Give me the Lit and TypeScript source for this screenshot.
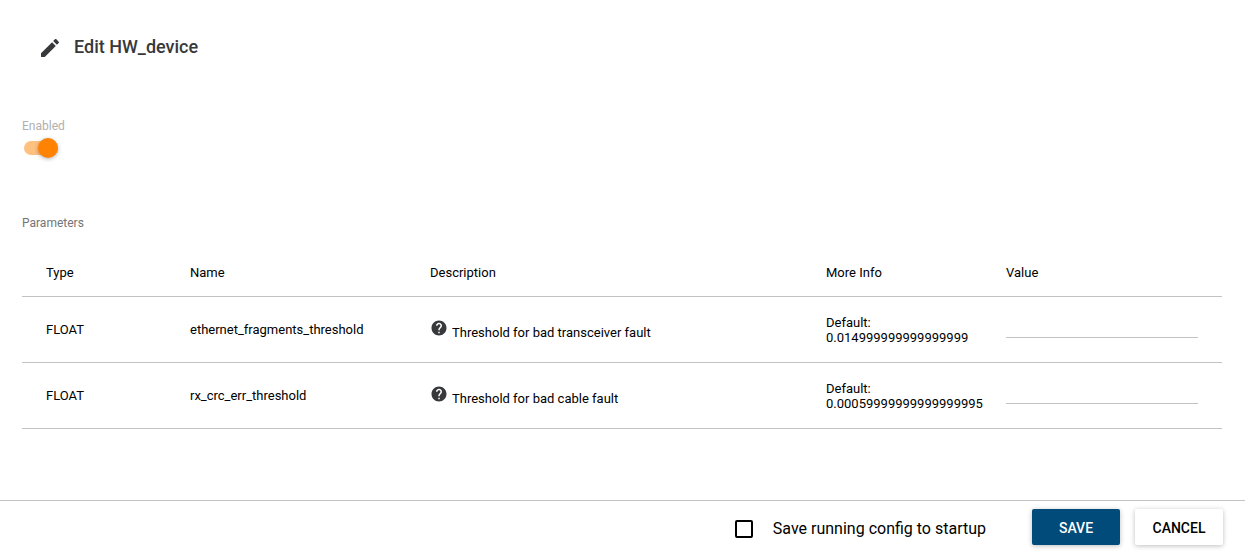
import { LitElement, html, css } from "lit";
import { customElement, state } from "lit/decorators.js";

interface Parameter {
  type: string;
  name: string;
  description: string;
  defaultValue: string;
}

const PARAMETERS: Parameter[] = [
  {
    type: "FLOAT",
    name: "ethernet_fragments_threshold",
    description: "Threshold for bad transceiver fault",
    defaultValue: "0.014999999999999999",
  },
  {
    type: "FLOAT",
    name: "rx_crc_err_threshold",
    description: "Threshold for bad cable fault",
    defaultValue: "0.00059999999999999995",
  },
];

@customElement("app-root")
export class AppRoot extends LitElement {
  @state() private enabled = true;
  @state() private saveToStartup = false;

  static styles = css`
    :host {
      display: block;
      font-family: Roboto, "Liberation Sans", sans-serif;
      font-size: 13px;
      line-height: 15px;
      color: #000;
      background: #fff;
    }
    * {
      box-sizing: border-box;
    }
    .page {
      display: flex;
      flex-direction: column;
      min-height: 100vh;
    }
    .header {
      display: flex;
      align-items: flex-start;
      gap: 12px;
      padding: 36px 38px 0;
    }
    .icon {
      display: block;
      flex: none;
      fill: #37393a;
    }
    .title {
      margin: 0;
      font-size: 18px;
      line-height: 22px;
      font-weight: 500;
      color: #37393a;
    }
    .content {
      flex: 1;
      padding: 0 23px 0 22px;
    }
    .enabled {
      display: flex;
      flex-direction: column;
      align-items: flex-start;
      gap: 7px;
      margin-top: 59px;
      font-size: 12px;
      color: #b0b0b0;
    }
    .switch {
      appearance: none;
      display: flex;
      align-items: center;
      width: 34px;
      height: 14px;
      margin: 0 2px;
      border-radius: 7px;
      background: #bdbdbd;
      cursor: pointer;
    }
    .switch::before {
      content: "";
      flex: none;
      width: 20px;
      height: 20px;
      border-radius: 50%;
      background: #fafafa;
      box-shadow: 0 1px 4px rgba(0, 0, 0, 0.3);
    }
    .switch:checked {
      justify-content: flex-end;
      background: #ffc180;
    }
    .switch:checked::before {
      background: #ff8200;
    }
    .section {
      margin: 61px 0 17px;
      font-size: 12px;
      line-height: 15px;
      font-weight: 400;
      color: #757575;
    }
    .table {
      width: 100%;
      table-layout: fixed;
      border-collapse: separate;
      border-spacing: 0;
    }
    .table th,
    .table td {
      padding: 0 24px;
      border-bottom: 1px solid #c3c3c6;
      text-align: left;
      font-weight: 400;
      vertical-align: middle;
    }
    .table th {
      height: 49px;
    }
    .table td {
      height: 66px;
    }
    .col-type {
      width: 12%;
    }
    .col-name {
      width: 20%;
    }
    .col-description {
      width: 33%;
    }
    .col-info {
      width: 15%;
    }
    .table td.info {
      padding-right: 0;
    }
    .description {
      display: flex;
      align-items: flex-end;
      gap: 4px;
    }
    .help {
      margin-bottom: 3px;
    }
    .value {
      display: block;
      width: 100%;
      height: 16px;
      padding: 0;
      border: 0;
      border-bottom: 1px solid #c3c3c6;
      border-radius: 0;
      outline: none;
      background: none;
      font: inherit;
    }
    .value:focus {
      border-color: #004b79;
    }
    .footer {
      display: flex;
      justify-content: flex-end;
      align-items: center;
      flex-wrap: wrap;
      padding: 8px 22px 7px;
      border-top: 1px solid #c3c3c6;
    }
    .startup {
      display: flex;
      align-items: center;
      gap: 20px;
      margin-right: 46px;
      padding-top: 4px;
      font-size: 16px;
      line-height: 20px;
      cursor: pointer;
    }
    .checkbox {
      appearance: none;
      width: 18px;
      height: 18px;
      margin: 0;
      border: 2px solid #000;
      border-radius: 2px;
      cursor: pointer;
    }
    .checkbox:checked {
      background: #004b79;
    }
    .actions {
      display: flex;
      gap: 15px;
    }
    .button {
      min-width: 88px;
      height: 36px;
      padding: 2px 16px 0;
      border: 0;
      border-radius: 2px;
      background: #fff;
      color: #000;
      font-family: inherit;
      font-size: 14px;
      font-weight: 500;
      line-height: 20px;
      text-transform: uppercase;
      box-shadow: 0 1px 5px rgba(0, 0, 0, 0.26);
      cursor: pointer;
    }
    .primary {
      background: #004b79;
      color: #fff;
    }
  `;

  private renderRow(p: Parameter) {
    return html`
      <tr>
        <td>${p.type}</td>
        <td>${p.name}</td>
        <td>
          <div class="description">
            <svg class="icon help" width="18" height="18" viewBox="0 0 24 24" aria-hidden="true">
              <path
                d="M12 2C6.48 2 2 6.48 2 12s4.480 10 10 10 10-4.480 10-10S17.520 2 12 2zm1 17h-2v-2h2v2zm2.070-7.750l-.9.920C13.450 12.900 13 13.500 13 15h-2v-.5c0-1.100.450-2.100 1.170-2.830l1.240-1.260c.370-.360.590-.860.590-1.410 0-1.100-.9-2-2-2s-2 .9-2 2H8c0-2.210 1.790-4 4-4s4 1.790 4 4c0 .880-.360 1.680-.930 2.250z"
              />
            </svg>
            <span>${p.description}</span>
          </div>
        </td>
        <td class="info">Default:<br />${p.defaultValue}</td>
        <td><input class="value" type="text" aria-label=${p.name} /></td>
      </tr>
    `;
  }

  render() {
    return html`
      <form class="page" @submit=${(e: Event) => e.preventDefault()}>
        <header class="header">
          <svg class="icon" width="24" height="24" viewBox="0 0 24 24" aria-hidden="true">
            <path
              d="M3 17.250V21h3.750L17.810 9.940l-3.750-3.750L3 17.250zM20.710 7.040c.390-.390.390-1.020 0-1.410l-2.340-2.340c-.390-.390-1.020-.390-1.410 0l-1.830 1.830 3.750 3.750 1.830-1.830z"
            />
          </svg>
          <h1 class="title">Edit HW_device</h1>
        </header>
        <main class="content">
          <div class="enabled">
            <label for="enabled">Enabled</label>
            <input
              id="enabled"
              class="switch"
              type="checkbox"
              role="switch"
              .checked=${this.enabled}
              @change=${(e: Event) => (this.enabled = (e.target as HTMLInputElement).checked)}
            />
          </div>
          <h2 class="section">Parameters</h2>
          <table class="table">
            <colgroup>
              <col class="col-type" />
              <col class="col-name" />
              <col class="col-description" />
              <col class="col-info" />
              <col />
            </colgroup>
            <thead>
              <tr>
                <th scope="col">Type</th>
                <th scope="col">Name</th>
                <th scope="col">Description</th>
                <th scope="col">More Info</th>
                <th scope="col">Value</th>
              </tr>
            </thead>
            <tbody>
              ${PARAMETERS.map((p) => this.renderRow(p))}
            </tbody>
          </table>
        </main>
        <footer class="footer">
          <label class="startup">
            <input
              class="checkbox"
              type="checkbox"
              .checked=${this.saveToStartup}
              @change=${(e: Event) => (this.saveToStartup = (e.target as HTMLInputElement).checked)}
            />
            <span>Save running config to startup</span>
          </label>
          <div class="actions">
            <button class="button primary" type="submit">Save</button>
            <button class="button" type="button">Cancel</button>
          </div>
        </footer>
      </form>
    `;
  }
}
